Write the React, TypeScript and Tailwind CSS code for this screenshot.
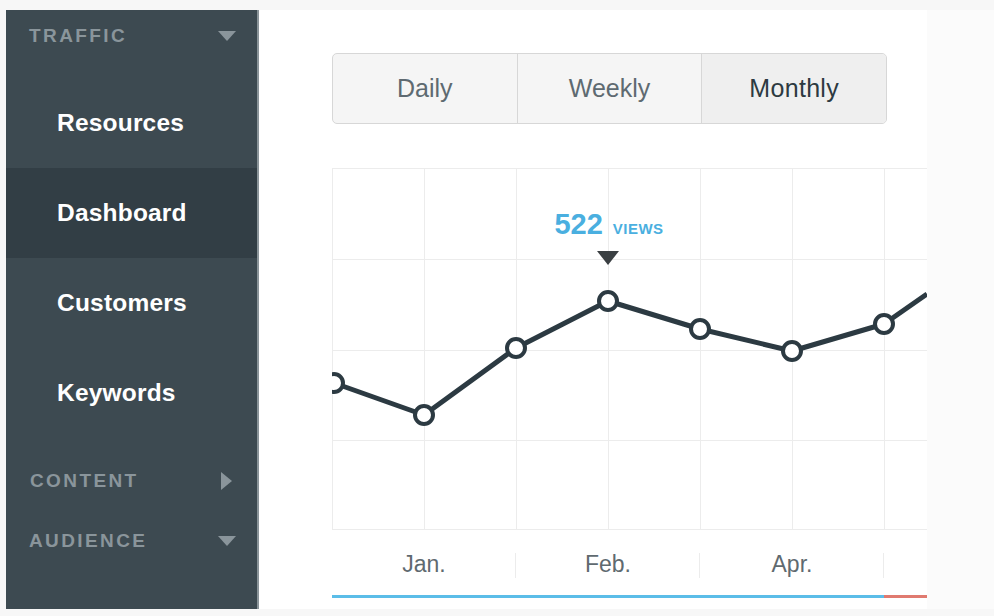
import React from "react";

const font = { fontFamily: '"Liberation Sans", Arial, Helvetica, sans-serif' };

function Down() {
  return (
    <svg width="18" height="10" viewBox="0 0 18 10">
      <polygon points="0,0 18,0 9,10" fill="#8a959b" />
    </svg>
  );
}
function Right() {
  return (
    <svg width="11" height="18" viewBox="0 0 11 18">
      <polygon points="0,0 11,9 0,18" fill="#8a959b" />
    </svg>
  );
}

const items = ["Resources", "Dashboard", "Customers", "Keywords"];

function Sidebar() {
  return (
    <div className="w-[253px] h-full bg-[#3d4a51] border-r-2 border-[#8a9499] flex flex-col">
      <div className="h-[52px] flex items-center justify-between pl-[23px] pr-[21px]">
        <span className="text-[19px] font-bold tracking-[2.4px] text-[#8a959b]">TRAFFIC</span>
        <Down />
      </div>
      <div className="mt-[16px] flex flex-col">
        {items.map((t) => (
          <div
            key={t}
            className={
              "h-[90px] flex items-center pl-[51px] text-[24.5px] font-bold text-white tracking-[0.2px] " +
              (t === "Dashboard" ? "bg-[#323e45]" : "")
            }
          >
            {t}
          </div>
        ))}
      </div>
      <div className="mt-[13px] h-[60px] flex items-center justify-between pl-[24px] pr-[25px]">
        <span className="text-[19px] font-bold tracking-[2.4px] text-[#8a959b]">CONTENT</span>
        <Right />
      </div>
      <div className="h-[60px] flex items-center justify-between pl-[23px] pr-[21px]">
        <span className="text-[19px] font-bold tracking-[2.4px] text-[#8a959b]">AUDIENCE</span>
        <Down />
      </div>
    </div>
  );
}

const pts: [number, number][] = [
  [2, 215],
  [92, 247],
  [184, 180],
  [276, 133],
  [368, 161],
  [460, 183],
  [552, 156],
];

function Chart() {
  const vx = [0.5, 92.5, 184.5, 276.5, 368.5, 460.5, 552.5];
  const hy = [0.5, 91.5, 182.5, 272.5, 361.5];
  const line = [...pts, [595, 126] as [number, number]].map((p) => p.join(",")).join(" ");
  return (
    <div className="relative w-[595px] h-[362px]">
      <svg width="595" height="362" viewBox="0 0 595 362" className="block overflow-hidden">
        {vx.map((x) => (
          <line key={"v" + x} x1={x} y1={0} x2={x} y2={362} stroke="#ececec" strokeWidth="1" />
        ))}
        {hy.map((y) => (
          <line key={"h" + y} x1={0} y1={y} x2={595} y2={y} stroke="#ececec" strokeWidth="1" />
        ))}
        <polyline points={line} fill="none" stroke="#2c3a42" strokeWidth="5" strokeLinejoin="round" />
        {pts.map(([x, y]) => (
          <circle key={x} cx={x} cy={y} r="9" fill="#fff" stroke="#2c3a42" strokeWidth="4" />
        ))}
        <polygon points="265,83 287,83 276,97" fill="#3a3f42" />
      </svg>
      <div className="absolute left-[277px] top-[42px] -translate-x-1/2 flex items-baseline gap-[10px] whitespace-nowrap text-[#4aafe0] font-bold">
        <span className="text-[29px] leading-none">522</span>
        <span className="text-[15px] leading-none tracking-[0.5px]">VIEWS</span>
      </div>
    </div>
  );
}

function Axis() {
  const cells = ["Jan.", "Feb.", "Apr."];
  return (
    <div className="w-[595px] h-[65px] flex">
      {cells.map((c) => (
        <div key={c} className="w-[184px] h-full flex items-center relative">
          <span className="flex-1 text-center text-[23px] text-[#5f6a70] pt-[4px]">{c}</span>
          <div className="absolute right-0 top-[23px] h-[25px] w-px bg-[#ececec]" />
        </div>
      ))}
    </div>
  );
}

export default function App() {
  return (
    <div style={font} className="w-[994px] h-[616px] bg-[#f7f7f7] pt-[10px] pl-[6px] pb-[7px] flex overflow-hidden">
      <Sidebar />
      <div className="w-[668px] h-full bg-white pl-[73px] pt-[43px] flex flex-col">
        <div className="w-[555px] h-[71px] flex border border-[#d7d7d7] rounded-[5px] overflow-hidden bg-[#f5f5f5]">
          <div className="flex-1 flex items-center justify-center text-[25px] text-[#5e6a71] border-r border-[#d7d7d7]">Daily</div>
          <div className="flex-1 flex items-center justify-center text-[25px] text-[#5e6a71] border-r border-[#d7d7d7]">Weekly</div>
          <div className="flex-1 flex items-center justify-center text-[25px] text-[#2d3a41] bg-[#efefef] tracking-[0.3px]">Monthly</div>
        </div>
        <div className="mt-[44px]">
          <Chart />
        </div>
        <Axis />
        <div className="w-[595px] h-[3px] flex">
          <div className="w-[552px] bg-[#5bbde8]" />
          <div className="flex-1 bg-[#e07a70]" />
        </div>
      </div>
      <div className="flex-1 h-full bg-[#fbfbfb]" />
    </div>
  );
}
